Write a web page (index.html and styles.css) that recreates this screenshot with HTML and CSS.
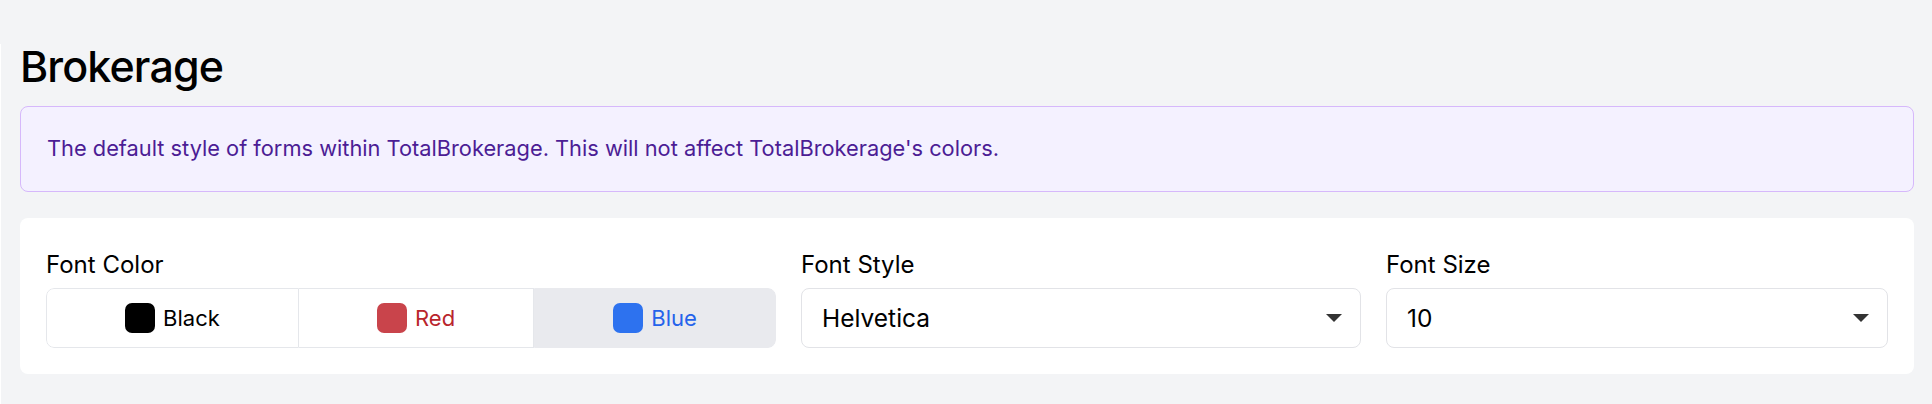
FILE: index.html
```html
<!DOCTYPE html>
<html lang="en">
<head>
<meta charset="utf-8">
<title>Brokerage</title>
<link rel="stylesheet" href="styles.css">
</head>
<body>
<main class="panel">
  <h1 class="title">Brokerage</h1>
  <div class="alert">The default style of forms within TotalBrokerage. This will not affect TotalBrokerage's colors.</div>
  <section class="card">
    <div class="field">
      <div class="label">Font Color</div>
      <div class="segmented">
        <div class="seg"><span class="swatch swatch-black"></span><span class="seg-text">Black</span></div>
        <div class="seg seg-red"><span class="swatch swatch-red"></span><span class="seg-text">Red</span></div>
        <div class="seg seg-blue seg-active"><span class="swatch swatch-blue"></span><span class="seg-text">Blue</span></div>
      </div>
    </div>
    <div class="field">
      <div class="label">Font Style</div>
      <div class="select"><span class="select-value">Helvetica</span><svg class="caret" width="16" height="8" viewBox="0 0 16 8"><path d="M0 0 H16 L8 8 Z" fill="#333"/></svg></div>
    </div>
    <div class="field">
      <div class="label">Font Size</div>
      <div class="select"><span class="select-value">10</span><svg class="caret" width="16" height="8" viewBox="0 0 16 8"><path d="M0 0 H16 L8 8 Z" fill="#333"/></svg></div>
    </div>
  </section>
</main>
</body>
</html>
```
FILE: styles.css
```css
html, body {
  margin: 0;
  padding: 0;
  background: #f3f4f6;
}
body {
  font-family: Inter, "Noto Sans", sans-serif;
  color: #000;
  height: 404px;
  overflow: hidden;
}
.panel {
  margin-top: 44px;
  border-left: 1px solid #ffffff;
  padding: 1px 18px 40px 19px;
  min-height: 360px;
  box-sizing: border-box;
}
.title {
  margin: 0;
  font-size: 43px;
  line-height: 43px;
  font-weight: 500;
  letter-spacing: -0.9px;
}
.alert {
  margin-top: 18px;
  background: #f4f1ff;
  border: 1px solid #d6b8fb;
  border-radius: 8px;
  padding: 25px 26px 26px;
  font-size: 21.8px;
  line-height: 33px;
  color: #4c1d95;
}
.card {
  margin-top: 26px;
  background: #ffffff;
  border-radius: 8px;
  padding: 26px;
  display: grid;
  grid-template-columns: 730fr 560fr 502fr;
  column-gap: 25px;
}
.label {
  font-size: 24px;
  line-height: 41px;
  margin-bottom: 3px;
}
.segmented {
  display: flex;
  height: 60px;
  box-sizing: border-box;
  border-radius: 8px;
  overflow: hidden;
}
.seg {
  flex: 1 1 auto;
  display: flex;
  align-items: center;
  justify-content: center;
  gap: 8px;
  border: 1px solid #e5e7eb;
  box-sizing: border-box;
  font-size: 22px;
}
.seg:first-child {
  border-radius: 8px 0 0 8px;
}
.seg-red {
  border-left: none;
  color: #b9252c;
}
.seg-blue {
  color: #2563eb;
}
.seg-active {
  background: #e9eaee;
  border-color: #e9eaee;
  border-radius: 0 8px 8px 0;
}
.swatch {
  width: 30px;
  height: 30px;
  border-radius: 7px;
  flex: none;
}
.swatch-black { background: #000000; }
.swatch-red { background: #c9444b; }
.swatch-blue { background: #2d72ef; }
.select {
  height: 60px;
  box-sizing: border-box;
  border: 1px solid #e2e3e7;
  border-radius: 8px;
  display: flex;
  align-items: center;
  justify-content: space-between;
  padding: 0 18px 0 20px;
  font-size: 24.5px;
}
.caret {
  flex: none;
}
```
